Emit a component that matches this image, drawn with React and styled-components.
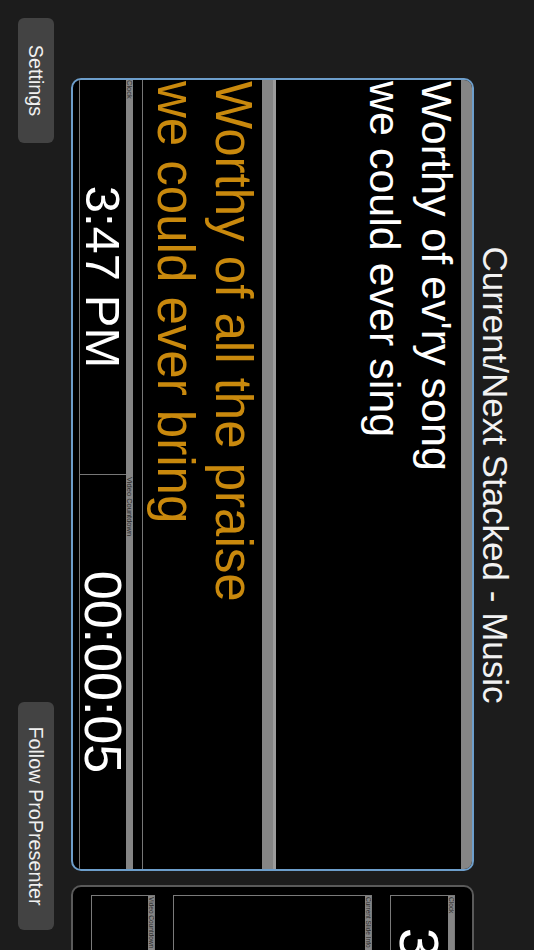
import React from "react";
import styled, { createGlobalStyle } from "styled-components";

const GlobalStyle = createGlobalStyle`
  html, body {
    margin: 0;
    padding: 0;
    background: #1c1c1c;
    width: 534px;
    height: 950px;
    overflow: hidden;
  }
  #root {
    width: 534px;
    height: 950px;
    overflow: hidden;
  }
`;

// the app is shown in landscape, turned a quarter clockwise
const Stage = styled.div`
  width: 950px;
  height: 534px;
  transform-origin: 0 0;
  transform: translateX(534px) rotate(90deg);
  display: flex;
  flex-direction: column;
  overflow: hidden;
  background: #1c1c1c;
  font-family: "Liberation Sans", Arial, sans-serif;
  color: #fff;
`;

const Header = styled.div`
  height: 60px;
  box-sizing: border-box;
  padding-top: 19px;
  text-align: center;
  font-size: 35px;
  line-height: 40px;
  color: #f2f2f2;
  white-space: nowrap;
`;

const Carousel = styled.div`
  height: 403px;
  display: flex;
  gap: 14px;
  padding-left: 78px;
`;

const Panel = styled.div`
  flex: 0 0 793px;
  box-sizing: border-box;
  height: 403px;
  border: 2px solid ${(p) => (p.active ? "#6d9ecb" : "#5a5a5a")};
  border-radius: 10px;
  background: #000;
  overflow: hidden;
  display: flex;
  flex-direction: column;
`;

const LabelBar = styled.div`
  height: ${(p) => p.h}px;
  flex: 0 0 auto;
  background: #858585;
  border-top: ${(p) => (p.edge ? "3px solid #9c9c9c" : "none")};
  box-sizing: border-box;
`;

const LyricBox = styled.div`
  height: ${(p) => p.h}px;
  flex: 0 0 auto;
  overflow: hidden;
  padding-left: 1px;
  color: ${(p) => p.color};
  font-size: ${(p) => p.size}px;
  line-height: ${(p) => p.lh}px;
  white-space: nowrap;
`;

const Lines = styled.div`
  margin-top: ${(p) => p.shift}px;
`;

const TimerSection = styled.div`
  flex: 0 0 auto;
  border-top: 1px solid #777;
  border-bottom: 1px solid #777;
  padding-top: 9px;
  display: grid;
  grid-template-columns: 394px 1fr;
  grid-template-rows: 7px 46px;
`;

const TinyLabel = styled.div`
  background: #858585;
  color: #2b2b2b;
  font-size: 7.5px;
  line-height: 7px;
  padding-left: ${(p) => p.pad}px;
  white-space: nowrap;
  overflow: hidden;
`;

const TimeCell = styled.div`
  display: flex;
  align-items: center;
  justify-content: center;
  font-size: ${(p) => p.size}px;
  line-height: 1;
  color: #fff;
  border-left: ${(p) => (p.divider ? "1px solid #777" : "none")};
  white-space: nowrap;
`;

const SecondInner = styled.div`
  display: flex;
  flex-direction: column;
  gap: 18px;
  padding: 17px 0 0 8px;
`;

const StageBox = styled.div`
  width: ${(p) => p.w}px;
  height: ${(p) => p.h}px;
  box-sizing: border-box;
  border: 1px solid #7a7a7a;
  display: flex;
  flex-direction: column;
`;

const BoxLabel = styled.div`
  height: 6px;
  background: #858585;
  color: #2b2b2b;
  font-size: 6.5px;
  line-height: 6px;
  padding-left: 1px;
  white-space: nowrap;
  overflow: hidden;
`;

const BoxBody = styled.div`
  flex: 1;
  display: flex;
  align-items: center;
  justify-content: center;
  font-size: ${(p) => p.size || 20}px;
  line-height: 1;
  color: #fff;
  white-space: nowrap;
`;

const Footer = styled.div`
  display: flex;
  justify-content: space-between;
  padding: 17px 20px 0 18px;
`;

const Button = styled.button`
  width: ${(p) => p.w}px;
  height: 36px;
  border: none;
  border-radius: 6px;
  background: #434343;
  color: #f0f0f0;
  font-family: "Liberation Sans", Arial, sans-serif;
  font-size: 19.8px;
  padding: 0;
  white-space: nowrap;
`;

export default function App() {
  return (
    <>
      <GlobalStyle />
      <Stage>
        <Header>Current/Next Stacked - Music</Header>
        <Carousel>
          <Panel active>
            <LabelBar h={11} />
            <LyricBox h={185} size={43} lh={52} color="#ffffff">
              <Lines shift={-2}>
                <div>Worthy of ev'ry song</div>
                <div>we could ever sing</div>
              </Lines>
            </LyricBox>
            <LabelBar h={14} edge />
            <LyricBox h={119} size={51} lh={58} color="#c9890d">
              <Lines shift={0}>
                <div>Worthy of all the praise</div>
                <div>we could ever bring</div>
              </Lines>
            </LyricBox>
            <TimerSection>
              <TinyLabel pad={0}>Clock</TinyLabel>
              <TinyLabel pad={3}>Video Countdown</TinyLabel>
              <TimeCell size={49}>3:47 PM</TimeCell>
              <TimeCell size={52} divider>
                00:00:05
              </TimeCell>
            </TimerSection>
          </Panel>
          <Panel>
            <SecondInner>
              <StageBox w={274} h={65}>
                <BoxLabel>Clock</BoxLabel>
                <BoxBody size={56}>3:47 PM</BoxBody>
              </StageBox>
              <StageBox w={600} h={199}>
                <BoxLabel>Current Slide Info</BoxLabel>
                <BoxBody />
              </StageBox>
              <StageBox w={274} h={64}>
                <BoxLabel>Video Countdown</BoxLabel>
                <BoxBody />
              </StageBox>
            </SecondInner>
          </Panel>
        </Carousel>
        <Footer>
          <Button w={125}>Settings</Button>
          <Button w={228}>Follow ProPresenter</Button>
        </Footer>
      </Stage>
    </>
  );
}
